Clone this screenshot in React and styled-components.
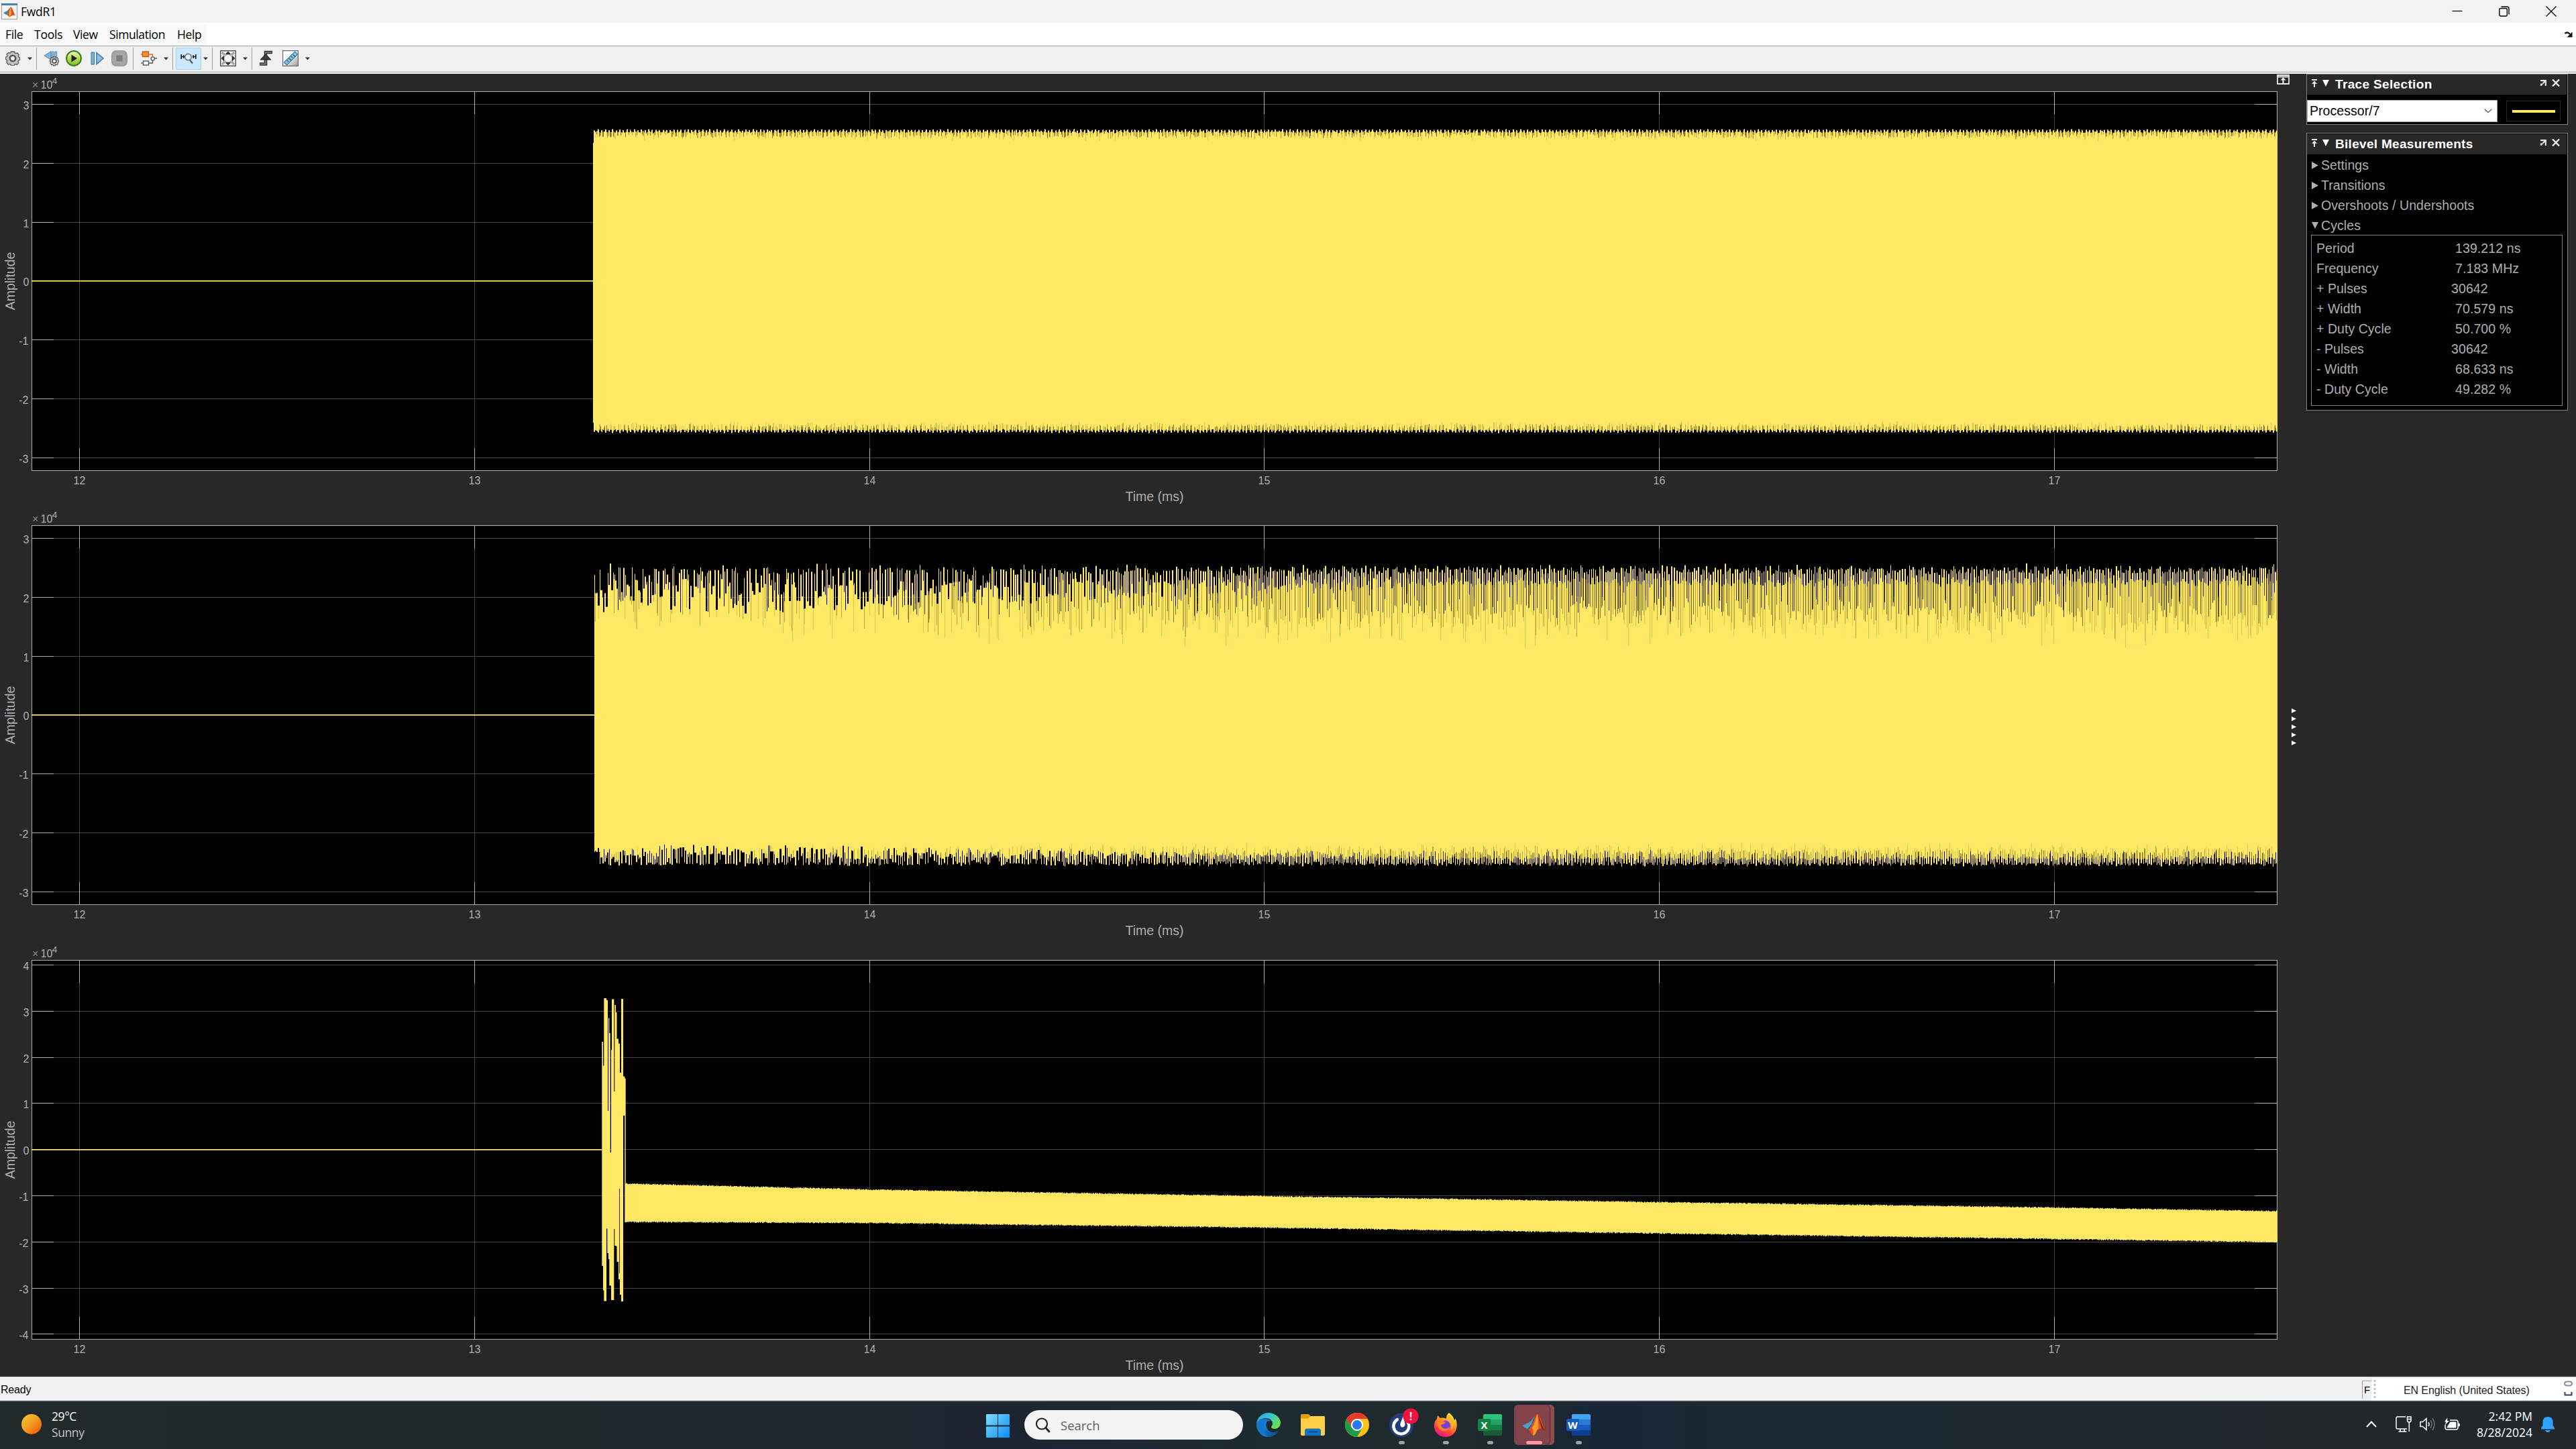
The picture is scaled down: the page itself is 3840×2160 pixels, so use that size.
import React from "react";
import styled, { createGlobalStyle } from "styled-components";

const YELLOW = "#ffe863";
const UI = '"Open Sans", "Noto Sans", sans-serif';
const ARIAL = '"Liberation Sans", Arial, sans-serif';

const Global = createGlobalStyle`
  html, body { margin: 0; padding: 0; background: #282828; overflow: hidden; }
  * { box-sizing: border-box; }
  svg { display: block; flex: none; }
`;

const Screen = styled.div`
  width: 3840px;
  height: 2160px;
  display: flex;
  flex-direction: column;
  overflow: hidden;
  font-family: ${ARIAL};
`;

/* ---------- window chrome ---------- */

const TitleBar = styled.header`
  height: 34px;
  flex: none;
  display: flex;
  align-items: center;
  padding: 0 29px 0 2px;
  background: #f3f3f3;
  font-family: ${UI};
`;

const Title = styled.span`
  flex: 1;
  padding-left: 5px;
  font-size: 17.5px;
  line-height: 34px;
  letter-spacing: -0.3px;
  color: #000;
`;

const WindowButtons = styled.div`
  display: flex;
  align-items: center;
  gap: 54px;
`;

const MenuBar = styled.nav`
  height: 36px;
  flex: none;
  display: flex;
  justify-content: space-between;
  background: #fff;
  border-bottom: 1px solid #f3f3f3;
  box-shadow: inset 0 -1px 0 #a0a0a0;
  font-family: ${UI};
`;

const MenuList = styled.div`
  width: 309px;
  height: 34px;
  display: flex;
  background: #f9f9f9;
  padding-left: 8px;
`;

const MenuItem = styled.span`
  width: ${(p) => p.$w}px;
  font-size: 17.5px;
  line-height: 35px;
  letter-spacing: ${(p) => p.$ls || 0}px;
  white-space: nowrap;
  color: #000;
`;

const MenuCorner = styled.div`
  padding: 13px 5px 0 0;
`;

const Toolbar = styled.div`
  height: 40px;
  flex: none;
  display: flex;
  align-items: center;
  background: #f0f0f0;
  padding-bottom: 4px;
  border-bottom: 2px solid #fff;
  box-shadow: inset 0 -1px 0 #a0a0a0;
`;

const Tool = styled.span`
  display: flex;
  margin-left: ${(p) => p.$ml}px;
`;

const ActiveTool = styled.span`
  width: 38px;
  height: 33px;
  margin-left: 4px;
  display: flex;
  align-items: center;
  justify-content: center;
  background: #cce8ff;
  border: 1px solid #99d1ff;
  border-radius: 2px;
`;

const Separator = styled.span`
  width: 1px;
  height: 33px;
  margin-left: ${(p) => p.$ml}px;
  background: #a0a0a0;
`;

/* ---------- workspace ---------- */

const Workspace = styled.main`
  height: 1942px;
  flex: none;
  display: flex;
  background: #282828;
`;

const Plots = styled.section`
  width: 3394px;
  flex: none;
  display: flex;
  flex-direction: column;
`;

const Splitter = styled.div`
  width: 44px;
  flex: none;
  display: flex;
  flex-direction: column;
  padding-top: 1px;
`;

const SplitterGrip = styled.div`
  display: flex;
  flex-direction: column;
  gap: 5px;
  margin: 930px 0 0 22px;
`;

const Sidebar = styled.aside`
  width: 390px;
  flex: none;
  display: flex;
  flex-direction: column;
  gap: 12px;
`;

const Panel = styled.section`
  height: ${(p) => p.$h}px;
  border: 1px solid #808080;
  background: #000;
  display: flex;
  flex-direction: column;
`;

const PanelHeader = styled.div`
  height: 30px;
  flex: none;
  margin: ${(p) => p.$mt || 0}px 1px 0 0;
  display: flex;
  align-items: center;
  padding: 0 10px 5px 7px;
  background: #282828;
`;

const PanelTitle = styled.h2`
  flex: 1;
  margin: 4px 0 0 9px;
  font-size: 19px;
  line-height: 24px;
  font-weight: 700;
  letter-spacing: ${(p) => p.$ls}px;
  color: #fff;
`;

const TraceRow = styled.div`
  display: flex;
  align-items: center;
  margin-top: 8px;
  gap: 13px;
`;

const Select = styled.div`
  width: 284px;
  height: 33px;
  display: flex;
  align-items: center;
  justify-content: space-between;
  padding: 0 7px 0 3px;
  background: #fff;
  border: 1px solid #a8a8a8;
  font-size: 19.5px;
  letter-spacing: 0.05px;
  color: #000;
`;

const TraceSwatch = styled.div`
  width: 81px;
  height: 31px;
  display: flex;
  align-items: center;
  justify-content: center;
  border: 1px solid #282828;
  &::after {
    content: "";
    width: 64px;
    height: 4px;
    background: ${YELLOW};
  }
`;

const Group = styled.div`
  height: 30px;
  flex: none;
  display: flex;
  align-items: center;
  gap: 4px;
  padding: 2px 0 0 7px;
  font-size: 19.5px;
  letter-spacing: 0.08px;
  color: #afafaf;
`;

const Readings = styled.dl`
  margin: 0 7px 0 6px;
  height: 255px;
  border: 1px solid #808080;
  padding: 4px 0 0 7px;
`;

const Reading = styled.div`
  display: grid;
  grid-template-columns: ${(p) => (p.$count ? 201 : 207)}px 1fr;
  height: 30px;
  align-items: center;
  font-size: 19.5px;
  color: #afafaf;
`;

const Term = styled.dt`
  margin: 0;
  letter-spacing: 0.05px;
`;
const Value = styled.dd`
  margin: 0;
  letter-spacing: 0.1px;
`;

/* ---------- status bar ---------- */

const StatusBar = styled.footer`
  height: 36px;
  flex: none;
  display: flex;
  justify-content: space-between;
  background: #f0f0f0;
  border-top: 1px solid #b4b4b4;
  box-shadow: inset 0 1px 0 #fff;
  font-size: 16px;
  color: #000;
`;

const StatusText = styled.span`
  padding-left: 1px;
  line-height: 38px;
  letter-spacing: -0.2px;
`;

const StatusRight = styled.div`
  display: flex;
`;

const StatusMode = styled.span`
  width: 14px;
  height: 27px;
  margin: 5px 0 0;
  border-left: 1px solid #a0a0a0;
  border-top: 1px solid #a0a0a0;
  padding-left: 2px;
  font-size: 15px;
  line-height: 26px;
`;

const LanguageBar = styled.div`
  width: 305px;
  height: 33px;
  margin-top: 2px;
  display: flex;
  background: #fff;
  padding: 2px 5px 0 3px;
`;

const Language = styled.span`
  flex: 1;
  padding-left: 41px;
  line-height: 31px;
  font-size: 16px;
  letter-spacing: -0.1px;
  color: #222;
`;

/* ---------- taskbar ---------- */

const Taskbar = styled.div`
  height: 72px;
  flex: none;
  display: flex;
  align-items: stretch;
  border-top: 2px solid #40464b;
  background: linear-gradient(90deg, #21292b 0%, #20282b 20%, #1c2431 40%, #1c2a31 47%, #202a2b 57%, #172636 62%, #1c2831 75%, #22272b 90%, #22272b 100%);
  font-family: ${UI};
`;

const Weather = styled.div`
  width: 1470px;
  display: flex;
  align-items: center;
  padding: 0 0 5px 32px;
  gap: 15px;
`;

const Sun = styled.span`
  width: 30px;
  height: 30px;
  border-radius: 50%;
  background: linear-gradient(135deg, #f0c330 10%, #f39a20 50%, #f0640c 85%);
`;

const Stack = styled.div`
  display: flex;
  flex-direction: column;
  align-items: flex-start;
  font-size: 17.5px;
  line-height: 24px;
  letter-spacing: -0.4px;
  color: #fff;
`;

const Muted = styled.span`
  color: #c3c6c8;
`;

const Launcher = styled.div`
  display: flex;
  align-items: center;
`;

const SearchBox = styled.div`
  width: 326px;
  height: 44px;
  margin: 0 5px 2px 22px;
  display: flex;
  align-items: center;
  gap: 15px;
  padding-left: 16px;
  border-radius: 22px;
  background: #f3f3f3;
  font-size: 18.5px;
  color: #5c5c5c;
`;

const TaskSlot = styled.div`
  position: relative;
  width: 66px;
  height: 70px;
  display: flex;
  align-items: center;
  justify-content: center;
  padding-bottom: 2px;
  &::after {
    content: "";
    display: ${(p) => (p.$mark ? "block" : "none")};
    position: absolute;
    bottom: 7px;
    left: ${(p) => (p.$mark === "active" ? 21 : 28.5)}px;
    width: ${(p) => (p.$mark === "active" ? 24 : 9)}px;
    height: 5px;
    border-radius: 3px;
    background: ${(p) => (p.$mark === "active" ? "#ff99a4" : "#9a9fa3")};
  }
`;

const ActiveTile = styled.div`
  width: 60px;
  height: 60px;
  display: flex;
  align-items: center;
  justify-content: center;
  padding: 0 2px 0 0;
  border-radius: 6px;
  background: #82434a;
  box-shadow: inset -6px 0 0 #8a4a50, inset -7px 0 0 #55272d;
`;

const Tray = styled.div`
  margin-left: auto;
  display: flex;
  align-items: center;
  padding: 0 32px 4px 0;
`;

const TrayIcon = styled.span`
  display: flex;
  margin-left: ${(p) => p.$ml}px;
`;

const Clock = styled.div`
  width: 108px;
  display: flex;
  flex-direction: column;
  align-items: flex-end;
  font-size: 17.5px;
  line-height: 24px;
  letter-spacing: 0;
  color: #fff;
`;

/* ---------- scope plots ---------- */

const AXIS = "#afafaf";
const GRID = "#454545";
const X_TICKS = [12, 13, 14, 15, 16, 17].map((v, i) => [v, 118 + Math.round(i * 588.75)]);

function random(seed) {
  let s = seed;
  return () => {
    s = (s + 0x6d2b79f5) | 0;
    let t = Math.imul(s ^ (s >>> 15), 1 | s);
    t = (t + Math.imul(t ^ (t >>> 7), 61 | t)) ^ t;
    return ((t ^ (t >>> 14)) >>> 0) / 4294967296;
  };
}

const bar = (x, w, y0, y1) => `M${x} ${y0.toFixed(1)}h${w}V${y1.toFixed(1)}h${-w}z`;

const SHADES = [0.14, 0.28, 0.5, 0.75];

function steadySignal() {
  const r = random(7);
  let body = "";
  const streaks = ["", "", "", ""];
  for (let x = 885; x < 3395; x += 1) {
    const beat = Math.abs((((x - 885) % 11.1) / 11.1) * 2 - 1);
    const phase = (x - 885) % 5.37;
    const peak = phase < 2;
    const side = () => (peak ? r() * 1.2 + beat * 2 : 2.5 + beat * 2.5 + r() * 2);
    const up = side();
    const down = side();
    body += bar(x, 1, 82 + up, 536 - down);
    if (!peak && r() < 0.7) {
      const k = Math.floor(r() * 3);
      streaks[k] += bar(x, 1, 82 + up, 82 + up + (12 - k * 2) * (0.4 + r() * 0.6));
    }
    if (!peak && r() < 0.7) {
      const k = Math.floor(r() * 3);
      streaks[k] += bar(x, 1, 536 - down - (12 - k * 2) * (0.4 + r() * 0.6), 536 - down);
    }
  }
  return { body: body + bar(884, 1, 103, 520), streaks };
}

function noisySignal() {
  const r = random(31);
  let body = "";
  const streaks = ["", "", "", ""];
  const TOP = 81.5;
  const BOTTOM = 536;
  const edge = (start, depthScale, emit) => {
    let x = start;
    while (x < 3395) {
      const t = Math.min(1, Math.max(0, (x - 1150) / 1000));
      const barW = r() < 0.45 ? 2 : 1;
      const gapW = 1 + Math.floor(r() * (t > 0.6 ? 1.8 : 2.7));
      const beat = Math.abs((((x - 886) % 15.4) / 15.4) * 2 - 1);
      const fast = Math.abs((((x - 886) % 6.7) / 6.7) * 2 - 1);
      const early = (1 - t) * (r() < 0.3 ? r() * 40 : 0);
      const high = (beat * 8 + fast * 10 + r() * 5 + early) * depthScale;
      for (let i = 0; i < barW && x < 3395; i += 1, x += 1) emit(x, high, 0, -1);
      const shared = r();
      for (let i = 0; i < gapW && x < 3395; i += 1, x += 1) {
        const deep = (1 - t) * (24 + shared * 52) + t * (19 + beat * 10 + shared * 10 + (r() < 0.06 ? 24 : 0));
        const black = Math.max(high, deep * depthScale);
        const has = r() < 0.25 + 0.72 * t;
        const pick = Math.floor(r() * (t > 0.15 ? 4 : 2));
        const reach = (130 - pick * 15) * depthScale * (0.55 + beat * 0.25 + r() * 0.2) * (0.8 + 0.2 * Math.min(1, (x - 886) / 450));
        emit(x, black, has ? reach : 0, pick);
      }
    }
  };
  const upper = {};
  const lower = {};
  edge(886, 1, (x, y, reach, k) => {
    upper[x] = TOP + y;
    if (reach > y) streaks[k] += bar(x, 1, TOP + y, TOP + reach);
  });
  edge(886, 0.45, (x, y, reach, k) => {
    let level = BOTTOM - y;
    if (x < 894) level = Math.min(level, 513);
    lower[x] = level;
    const lift = reach * 0.64;
    if (lift > y && x >= 894) streaks[k] += bar(x, 1, BOTTOM - lift, level);
  });
  for (let x = 886; x < 3395; x += 1) body += bar(x, 1, upper[x], lower[x]);
  return { body, streaks };
}

const BURST = [
  [897.3, 899, 1552.9, 1887], [899, 900.3, 1588.6, 1923.5], [900.3, 904, 1488, 1939.5],
  [904, 905.3, 1491, 1831.5], [905.3, 906, 1491, 1868], [906, 907, 1656, 1868],
  [907, 908.3, 1517.5, 1877], [908.3, 909.7, 1540, 1916.5], [909.7, 911, 1718, 1916.5],
  [911, 912, 1565, 1938], [912, 915.3, 1489.5, 1938], [915.3, 916.3, 1627, 1832],
  [916.3, 918, 1498, 1857], [918, 919.5, 1509, 1857.5], [919.5, 922, 1548.5, 1881],
  [922, 923.2, 1555.5, 1907], [923.2, 924, 1555.5, 1772], [923.2, 924, 1898, 1907],
  [924, 926, 1599, 1930], [926, 929, 1489, 1940], [929, 931.3, 1604.5, 1663],
  [931.3, 932.7, 1607.5, 1822],
];

const BAND = [
  [932, 1764.3, 1821.6], [1295, 1773.3, 1823], [1884, 1783, 1830],
  [2473, 1792, 1838.6], [3061, 1800, 1847], [3395, 1805.3, 1851.6],
];

function burstSignal() {
  const r = random(5);
  const shift = 1405;
  let body = BURST.map(([a, b, y0, y1]) => bar(a, +(b - a).toFixed(2), y0 - shift, y1 - shift)).join("");
  let seg = 0;
  for (let x = 932; x < 3395; x += 1) {
    while (x > BAND[seg + 1][0]) seg += 1;
    const [xa, ta, ba] = BAND[seg];
    const [xb, tb, bb] = BAND[seg + 1];
    const f = (x - xa) / (xb - xa);
    body += bar(x, 1, ta + (tb - ta) * f + r() * 1.8 - 0.9 - shift, ba + (bb - ba) * f + r() * 1.8 - 0.9 - shift);
  }
  return { body, streaks: ["", "", "", ""] };
}

const SCOPES = [
  { id: "upper", height: 647, max: 3, first: 45, step: 87.83, zero: 308, start: 885, ...steadySignal() },
  { id: "middle", height: 648, max: 3, first: 45, step: 87.83, zero: 308, start: 886, ...noisySignal() },
  { id: "lower", height: 647, max: 4, first: 33, step: 68.8, zero: 308, start: 897, ...burstSignal() },
];

function ScopePlot({ scope }) {
  const rows = [];
  for (let v = scope.max; v >= -scope.max; v -= 1) {
    rows.push([v, Math.round(scope.first + (scope.max - v) * scope.step)]);
  }
  return (
    <svg width="3395" height={scope.height} viewBox={`0 0 3395 ${scope.height}`} fontFamily={ARIAL} fill={AXIS}>
      <rect x="47" y="26" width="3348" height="566" fill="#000" />
      <g shapeRendering="crispEdges">
        {rows.map(([v, y]) => (
          <g key={v}>
            <rect x="48" y={y} width="3346" height="1" fill={GRID} />
            <rect x="48" y={y} width="32" height="1" />
            <rect x="3361" y={y} width="33" height="1" />
          </g>
        ))}
        {X_TICKS.map(([v, x]) => (
          <g key={v}>
            <rect x={x} y="26" width="1" height="566" fill={GRID} />
            <rect x={x} y="27" width="1" height="33" />
            <rect x={x} y="558" width="1" height="33" />
          </g>
        ))}
        <rect x="47.5" y="26.5" width="3347" height="565" fill="none" stroke={AXIS} />
      </g>
      <rect x="47" y={scope.zero} width={scope.start - 47} height="1" fill={YELLOW} />
      <rect x="47" y={scope.zero + 1} width={scope.start - 47} height="1" fill={YELLOW} opacity="0.7" />
      <path d={scope.body} fill={YELLOW} />
      {scope.streaks.map((d, i) => (
        <path key={i} d={d} fill="#000" opacity={SHADES[i]} />
      ))}
      {rows.map(([v, y]) => (
        <text key={v} x={v < 0 ? 42.5 : 43.5} y={y + 7.5} fontSize="16" textAnchor="end">{v}</text>
      ))}
      {X_TICKS.map(([v, x]) => (
        <text key={v} x={x + 0.5} y="612" fontSize="16" textAnchor="middle">{v}</text>
      ))}
      <text x="48" y="22" fontSize="16" fill="#8a8a8a">×</text>
      <text x="60.5" y="22" fontSize="16">10</text>
      <text x="78" y="15" fontSize="13">4</text>
      <text x="1721" y="636.5" fontSize="19.5" textAnchor="middle">Time (ms)</text>
      <text transform="translate(22 309) rotate(-90)" fontSize="19.5" textAnchor="middle">Amplitude</text>
    </svg>
  );
}

/* ---------- icons ---------- */

const MatlabMark = ({ size, w = size }) => (
  <svg width={w} height={size} viewBox="0 0 36 34" preserveAspectRatio="none">
    <path d="M0 18 L11 13 C15 11 16 6 19 3 L14 20 L8 24Z" fill="#4d9bd0" />
    <path d="M8 24 L14 17 L19 5 L20 10 L12 26Z" fill="#22557d" />
    <path d="M9 25 C13 25 14 34 17 34 C22 33 22 24 27 23 C31 22 33 25 36 27 C31 19 28 0 23.500 0 C19 0 19 16 9 25Z" fill="#d9531a" />
    <path d="M23.500 0 C21 4 21 13 15 22 C18 24 17 31 17 34 C22 33 21 24 25 23 C25 16 25 7 23.500 0Z" fill="#f59a2b" />
    <path d="M24 1 C28 7 29 18 36 27 L30 23 C28 16 26 8 24 1Z" fill="#8a1d12" />
  </svg>
);

const AppIcon = () => (
  <svg width="24" height="24" viewBox="0 0 24 24">
    <rect x=".5" y="1" width="23" height="22.500" fill="#f4f4f4" stroke="#9a9a9a" />
    <rect x="0" y="0" width="24" height="3" fill="#4a7fb0" />
    <path d="M3 14 L9 11 L14 5 L10 15 L7 17Z" fill="#3c86bf" />
    <path d="M8 17 L14 5 C17 7 18 14 21 18 C17 16 14 20 12 20Z" fill="#d6501c" />
    <path d="M14 5 L11 15 L12 20 L15 16Z" fill="#f6a12f" />
  </svg>
);

const GEAR_PATH = "M8.500 1h5l.6 2 1.600.8 2-1 2.500 2.800-1 2 .6 1.600 1.800.8v3.500l-2 .8-.7 1.600.9 2-2.500 2.500-2-.9-1.600.7-.8 1.800H8.700l-.8-1.900-1.600-.7-2 .9L1.800 17l.9-2-.6-1.500-1.600-.9V9.200l1.800-.8.7-1.600-1-2L4.500 2.500l2 .9L8 2.800z";

const Gear = () => (
  <svg width="22" height="22" viewBox="0 0 22 22">
    <path d={GEAR_PATH} fill="#c4c4c4" stroke="#585858" strokeWidth="1.300" />
    <circle cx="11" cy="11" r="4.200" fill="#eee" stroke="#555" strokeWidth="2.600" />
  </svg>
);

const Drop = () => (
  <svg width="7" height="5" viewBox="0 0 7 5"><path d="M0 .5h7L3.500 4.500z" fill="#333" /></svg>
);

const StepBack = () => (
  <svg width="23" height="24" viewBox="0 0 23 24">
    <path d="M1 8 L11 1.500 V14Z" fill="#8fb4d2" stroke="#4f7fa8" />
    <path d="M12.500 2h2.600v11h-2.600zM17 2h2.600v9H17z" fill="#a9cbe6" stroke="#4f7fa8" />
    <g transform="translate(9 9) scale(.63)">
      <path d={GEAR_PATH} fill="#c8c8c8" stroke="#555" strokeWidth="1.800" />
      <circle cx="11" cy="11" r="4.600" fill="#fff" stroke="#555" strokeWidth="3" />
    </g>
  </svg>
);

const Play = () => (
  <svg width="24" height="24" viewBox="0 0 24 24">
    <defs>
      <linearGradient id="play" x1="0" y1="0" x2="0" y2="1">
        <stop offset="0" stopColor="#f0f8c8" /><stop offset=".5" stopColor="#b6dc50" /><stop offset="1" stopColor="#7fc02a" />
      </linearGradient>
    </defs>
    <circle cx="12" cy="12" r="10.900" fill="url(#play)" stroke="#3f7a1e" strokeWidth="2" />
    <path d="M8.500 6.500 L17 12 L8.500 17.500Z" fill="#222" />
  </svg>
);

const StepForward = () => (
  <svg width="20" height="20" viewBox="0 0 20 20">
    <path d="M1 1h4.500v18H1z" fill="#7fb0d8" stroke="#3f7097" />
    <path d="M9 1.500 L19 10 L9 18.500Z" fill="#8fbce0" stroke="#3f7fb0" strokeWidth="1.600" />
  </svg>
);

const Stop = () => (
  <svg width="24" height="24" viewBox="0 0 24 24">
    <rect x="0" y="0" width="24" height="24" rx="7" fill="#9b9b9b" />
    <rect x="2" y="2" width="20" height="20" rx="6" fill="#a6a6a6" />
    <rect x="7.500" y="7.500" width="9" height="9" fill="#7c7c7c" />
  </svg>
);

const Blocks = () => (
  <svg width="24" height="24" viewBox="0 0 24 24" fill="none">
    <path d="M11 19h6.500v-4M20 12h4" stroke="#555" strokeWidth="1.400" />
    <rect x="2.500" y="2" width="9" height="7.500" fill="#f0903a" stroke="#c65a12" strokeWidth="1.400" />
    <path d="M0 6h3M11 6h6.500v4" stroke="#d86b1c" strokeWidth="1.300" />
    <rect x="3.500" y="16" width="8" height="6" fill="#fff" stroke="#555" strokeWidth="1.400" />
    <path d="M0 19h3" stroke="#555" strokeWidth="1.300" />
    <circle cx="17.700" cy="12.500" r="2.600" fill="#fff" stroke="#555" strokeWidth="1.300" />
  </svg>
);

const ZoomX = () => (
  <svg width="24" height="20" viewBox="0 0 24 20" fill="none">
    <path d="M1.200 4v7M22.800 4v7M4.800 5.200v4.600M19.200 5.200v4.600M2 7.500h4M18 7.500h4" stroke="#1c1c1c" strokeWidth="1.700" />
    <circle cx="11.500" cy="8" r="4.700" fill="#e6f2fb" stroke="#7c7c7c" strokeWidth="1.800" />
    <path d="M14 12.500 L18 17.500" stroke="#555" strokeWidth="2.200" />
  </svg>
);

const FitView = () => (
  <svg width="24" height="24" viewBox="0 0 24 24">
    <rect x=".7" y=".7" width="22.600" height="22.600" fill="#f4f4f4" stroke="#4d4d4d" strokeWidth="1.400" />
    <path d="M3 3l4 4M21 3l-4 4M3 21l4-4M21 21l-4-4" stroke="#9c9c9c" strokeWidth="3" />
    <circle cx="12" cy="12" r="6" fill="none" stroke="#a8a8a8" strokeWidth="1.500" />
    <path d="M12 1.500l4.500 4.500h-9zM12 22.500l4.500-4.500h-9zM1.500 12L6 7.500v9zM22.500 12L18 7.500v9z" fill="#333" />
  </svg>
);

const Trigger = () => (
  <svg width="20" height="24" viewBox="0 0 20 24">
    <path d="M1 20.500h9V3h10" fill="none" stroke="#2e2e2e" strokeWidth="4.600" />
    <path d="M1.500 20.500h8.500V3h9" fill="none" stroke="#8d8d8d" strokeWidth="1.500" />
    <path d="M10 5.500 L18 14H2Z" fill="#3b3b3b" stroke="#222" />
  </svg>
);

const Ruler = () => (
  <svg width="24" height="24" viewBox="0 0 24 24">
    <defs>
      <linearGradient id="ruler" x1="0" y1="0" x2="1" y2="1">
        <stop offset=".4" stopColor="#fff" /><stop offset="1" stopColor="#999" />
      </linearGradient>
    </defs>
    <rect x=".6" y=".6" width="22.800" height="22.800" fill="url(#ruler)" stroke="#666" strokeWidth="1.200" />
    <path d="M2.500 18 L18.500 2 L22.500 6 L6.500 22Z" fill="#8fc4e8" stroke="#3a78a4" strokeWidth="1.200" />
    <path d="M7 15l2 2M10 12l3 3M13 9l2 2M16 6.500l3 3" stroke="#24506f" strokeWidth="1.200" />
  </svg>
);

const Pin = () => (
  <svg width="8" height="12" viewBox="0 0 8 12"><path d="M0 0h8v2H0zM4 2.500L8 7H5v5H3V7H0z" fill="#e4e4e4" /></svg>
);
const TriDown = ({ color = "#fff" }) => (
  <svg width="10" height="10" viewBox="0 0 10 10"><path d="M0 0h10L5 10z" fill={color} /></svg>
);
const TriRight = ({ color = "#afafaf", w = 10, h = 11 }) => (
  <svg width={w} height={h} viewBox="0 0 10 10" preserveAspectRatio="none"><path d="M0 0v10l10-5z" fill={color} /></svg>
);
const Undock = () => (
  <svg width="10" height="10" viewBox="0 0 10 10"><path d="M1 1.200h7.800V9M8 2L4.500 5.500M2 9V6.500h2.500" fill="none" stroke="#e4e4e4" strokeWidth="2.200" /></svg>
);
const CloseSmall = () => (
  <svg width="12" height="11" viewBox="0 0 12 11"><path d="M1 .5l10 10M11 .5l-10 10" stroke="#e4e4e4" strokeWidth="2.300" /></svg>
);

const Edge = () => (
  <svg width="36" height="36" viewBox="0 0 36 36">
    <defs>
      <linearGradient id="edgeTop" x1="0" y1="0" x2="1" y2=".5"><stop offset="0" stopColor="#2aa6ea" /><stop offset=".55" stopColor="#35c6cf" /><stop offset="1" stopColor="#6be04e" /></linearGradient>
      <linearGradient id="edgeLow" x1="0" y1="0" x2="1" y2="1"><stop offset="0" stopColor="#1b8fe0" /><stop offset="1" stopColor="#0a3f86" /></linearGradient>
    </defs>
    <path d="M0 18C0 7 9 0 18 0s18 7 18 15c0 6-5 9-9 9-3 0-5-1-5-3 0-1 2-2 2-5 0-4-4-8-10-8C7 8 1 12 0 18z" fill="url(#edgeTop)" />
    <path d="M0 18c1-6 6-9 12-9 5 0 8 2 10 4-8-2-12 3-12 9 0 8 7 13 13 14-14 3-23-8-23-18z" fill="#1277cf" />
    <path d="M10 22c0-6 3-9 6-10-3 4-2 16 9 17 3 0 6-1 8-2-3 6-9 9-15 9-5-1-8-7-8-14z" fill="url(#edgeLow)" />
  </svg>
);

const Folder = () => (
  <svg width="36" height="34" viewBox="0 0 36 34">
    <path d="M0 2.500Q0 1 1.500 1H12l3 4h19.500q1.500 0 1.500 1.500V20H0z" fill="#e0a000" />
    <path d="M0 7.500h11L15 4h19.500Q36 4 36 5.500V31q0 2-2 2H2q-2 0-2-2z" fill="#ffcf48" />
    <path d="M6 33v-7q0-3.500 3.500-3.500h17Q30 22.500 30 26v7z" fill="#1272c4" />
    <path d="M11 27.500h14" stroke="#0b4d8a" strokeWidth="2" />
  </svg>
);

const Chrome = () => (
  <svg width="36" height="36" viewBox="0 0 36 36">
    <circle cx="18" cy="18" r="18" fill="#fbc116" />
    <path d="M2.400 9 A18 18 0 0 0 18 36 L25.800 22.500 L10.200 22.500Z" fill="#229a4a" />
    <path d="M2.400 9 A18 18 0 0 1 33.600 9 H18 Q12 9.500 9.600 14.500 L8.600 19.500Z" fill="#e33b2e" />
    <circle cx="18" cy="18" r="9" fill="#fff" />
    <circle cx="18" cy="18" r="7" fill="#2a78ee" />
  </svg>
);

const ClockApp = () => (
  <svg width="36" height="48" viewBox="1 0 36 48" overflow="visible">
    <circle cx="19" cy="24.500" r="18" fill="#243f77" />
    <path d="M13 16a11.500 11.500 0 1 0 15 3" fill="none" stroke="#fff" strokeWidth="4.400" strokeLinecap="round" />
    <path d="M21.500 11c-1 6-5 9-4 14 1.500 4 6.500 3 7-1 .3-4-2-7-3-13z" fill="#fff" />
    <circle cx="33" cy="11" r="11.500" fill="#f5113c" />
    <text x="33" y="17" fontFamily={ARIAL} fontSize="17" fontWeight="700" textAnchor="middle" fill="#fff">!</text>
  </svg>
);

const Firefox = () => (
  <svg width="34" height="36" viewBox="0 0 34 36">
    <defs>
      <linearGradient id="fox" x1=".8" y1="0" x2=".3" y2="1"><stop offset="0" stopColor="#fff04a" /><stop offset=".4" stopColor="#ff9a22" /><stop offset=".75" stopColor="#ff3b45" /><stop offset="1" stopColor="#e0168c" /></linearGradient>
    </defs>
    <path d="M22 0c5 4 7 7 8 11l2-2c5 13-1 27-15 27C6 36-1 28 0 18c0-4 2-7 4-9l1-5 4 4c4-1 7 0 9 1 0-4 1-7 4-9z" fill="url(#fox)" />
    <circle cx="16.500" cy="19" r="7.500" fill="#7a3fe0" />
    <path d="M5 13c4-2 8-1 12 1-2 3-5 3-7 4 1 6 8 8 13 3-1 8-15 9-18-1-1-3-1-5 0-7z" fill="#ff8420" />
    <path d="M18 9c6 3 10 8 7 17 5-5 5-11 2-15l-5-7c-1 2-3 3-4 5z" fill="#ffb52c" />
  </svg>
);

const OfficeIcon = ({ letter, shades, badge }) => (
  <svg width="36" height="34" viewBox="0 0 36 34">
    <path d="M8 3q0-2 2-2h24q2 0 2 2v6H8z" fill={shades[0]} />
    <path d="M8 9h28v8H8z" fill={shades[1]} />
    <path d="M8 17h28v8H8z" fill={shades[2]} />
    <path d="M8 25h28v6q0 2-2 2H10q-2 0-2-2z" fill={shades[3]} />
    <rect x="0" y="8" width="19" height="18" rx="2" fill={badge} />
    <text x="9.500" y="22.500" fontFamily={UI} fontSize="15" fontWeight="700" textAnchor="middle" fill="#fff">{letter}</text>
  </svg>
);

const CYCLES = [
  ["Period", "139.212 ns"],
  ["Frequency", "7.183 MHz"],
  ["+ Pulses", "30642", true],
  ["+ Width", "70.579 ns"],
  ["+ Duty Cycle", "50.700 %"],
  ["- Pulses", "30642", true],
  ["- Width", "68.633 ns"],
  ["- Duty Cycle", "49.282 %"],
];

function PanelBar({ title, ls, mt }) {
  return (
    <PanelHeader $mt={mt}>
      <Pin />
      <Tool $ml={8}><TriDown /></Tool>
      <PanelTitle $ls={ls}>{title}</PanelTitle>
      <Undock />
      <Tool $ml={8}><CloseSmall /></Tool>
    </PanelHeader>
  );
}

export default function App() {
  return (
    <Screen>
      <Global />
      <TitleBar>
        <AppIcon />
        <Title>FwdR1</Title>
        <WindowButtons>
          <svg width="16" height="16" viewBox="0 0 16 16"><path d="M.5 7.500h15" stroke="#000" strokeWidth="1.200" /></svg>
          <svg width="16" height="16" viewBox="0 0 16 16" fill="none" stroke="#000" strokeWidth="1.400"><rect x=".8" y="3.500" width="11.500" height="11.500" rx="2" /><path d="M3.500 1h8.500q3 0 3 3v8.500" /></svg>
          <svg width="16" height="16" viewBox="0 0 16 16"><path d="M.5.5l15 15M15.500.5l-15 15" stroke="#000" strokeWidth="1.300" /></svg>
        </WindowButtons>
      </TitleBar>
      <MenuBar>
        <MenuList>
          <MenuItem $w={43} $ls={-0.4}>File</MenuItem>
          <MenuItem $w={58} $ls={-0.2}>Tools</MenuItem>
          <MenuItem $w={54} $ls={-0.4}>View</MenuItem>
          <MenuItem $w={101} $ls={-0.4}>Simulation</MenuItem>
          <MenuItem $w={40} $ls={-0.4}>Help</MenuItem>
        </MenuList>
        <MenuCorner>
          <svg width="12" height="9" viewBox="0 0 12 9"><path d="M.5 3Q4-.5 8 4" fill="none" stroke="#111" strokeWidth="2.400" /><path d="M11.500.5V8.500H3.500z" fill="#111" /></svg>
        </MenuCorner>
      </MenuBar>
      <Toolbar>
        <Tool $ml={8}><Gear /></Tool>
        <Tool $ml={11}><Drop /></Tool>
        <Separator $ml={6} />
        <Tool $ml={10}><StepBack /></Tool>
        <Tool $ml={10}><Play /></Tool>
        <Tool $ml={13}><StepForward /></Tool>
        <Tool $ml={11}><Stop /></Tool>
        <Separator $ml={8} />
        <Tool $ml={11}><Blocks /></Tool>
        <Tool $ml={10}><Drop /></Tool>
        <Separator $ml={6} />
        <ActiveTool><ZoomX /></ActiveTool>
        <Tool $ml={3}><Drop /></Tool>
        <Separator $ml={6} />
        <Tool $ml={11}><FitView /></Tool>
        <Tool $ml={10}><Drop /></Tool>
        <Separator $ml={6} />
        <Tool $ml={10}><Trigger /></Tool>
        <Tool $ml={15}><Ruler /></Tool>
        <Tool $ml={10}><Drop /></Tool>
      </Toolbar>

      <Workspace>
        <Plots>
          {SCOPES.map((s) => <ScopePlot key={s.id} scope={s} />)}
        </Plots>
        <Splitter>
          <svg width="19" height="15" viewBox="0 0 19 15">
            <path d="M1 1h17v13H1zM1 3.500h17" fill="none" stroke="#e8e8e8" strokeWidth="1.800" />
            <path d="M9.500 4.500l4 4h-3V13h-2V8.500h-3z" fill="#fff" />
          </svg>
          <SplitterGrip>
            {[0, 1, 2, 3, 4].map((i) => <TriRight key={i} color="#fff" w={7} h={7} />)}
          </SplitterGrip>
        </Splitter>
        <Sidebar>
          <Panel $h={76}>
            <PanelBar title="Trace Selection" ls={0.35} />
            <TraceRow>
              <Select>
                Processor/7
                <svg width="12" height="7" viewBox="0 0 12 7"><path d="M.7.700l5.300 5 5.300-5" fill="none" stroke="#555" strokeWidth="1.200" /></svg>
              </Select>
              <TraceSwatch />
            </TraceRow>
          </Panel>
          <Panel $h={414}>
            <PanelBar title="Bilevel Measurements" ls={0.3} mt={1} />
            <Group><TriRight />Settings</Group>
            <Group><TriRight />Transitions</Group>
            <Group><TriRight />Overshoots / Undershoots</Group>
            <Group><TriDown color="#afafaf" />Cycles</Group>
            <Readings>
              {CYCLES.map(([name, value, count]) => (
                <Reading key={name} $count={count}>
                  <Term>{name}</Term>
                  <Value>{value}</Value>
                </Reading>
              ))}
            </Readings>
          </Panel>
        </Sidebar>
      </Workspace>

      <StatusBar>
        <StatusText>Ready</StatusText>
        <StatusRight>
          <StatusMode>F</StatusMode>
          <LanguageBar>
            <svg width="4" height="31" viewBox="0 0 4 31">
              {[0, 6, 12, 18, 24].map((y) => <rect key={y} x=".5" y={y} width="3" height="3" fill="#c4c4c4" />)}
            </svg>
            <Language>EN English (United States)</Language>
            <svg width="13" height="26" viewBox="0 0 13 26" fill="none" strokeWidth="2">
              <path d="M4 2.500Q1 3 1 5.500T4 8.500M9 2.500q3 .5 3 3T9 8.500M4 2.500h5M4 8.500h5" stroke="#8a8f98" />
              <path d="M1.500 18v4.500h10V18" stroke="#33415c" />
            </svg>
          </LanguageBar>
        </StatusRight>
      </StatusBar>

      <Taskbar>
        <Weather>
          <Sun />
          <Stack><span>29°C</span><Muted>Sunny</Muted></Stack>
        </Weather>
        <Launcher>
          <svg width="35" height="35" viewBox="0 0 35 35">
            <defs>
              <linearGradient id="win" x1="0" y1="0" x2="1" y2="1"><stop offset="0" stopColor="#7fdcff" /><stop offset="1" stopColor="#0a8cf5" /></linearGradient>
            </defs>
            <path d="M1 0h16v16.500H0V1q0-1 1-1zM18 0h16q1 0 1 1v15.500H18zM0 18.500h17V35H1q-1 0-1-1zM18 18.500h17V34q0 1-1 1H18z" fill="url(#win)" />
          </svg>
          <SearchBox>
            <svg width="23" height="23" viewBox="0 0 23 23" fill="none" stroke="#222" strokeWidth="2.200" strokeLinecap="round"><circle cx="10" cy="9.500" r="8" /><path d="M15.800 15.500L21 21" strokeWidth="2.800" /></svg>
            Search
          </SearchBox>
          <TaskSlot><Edge /></TaskSlot>
          <TaskSlot><Folder /></TaskSlot>
          <TaskSlot><Chrome /></TaskSlot>
          <TaskSlot $mark="open"><ClockApp /></TaskSlot>
          <TaskSlot $mark="open"><Firefox /></TaskSlot>
          <TaskSlot $mark="open"><OfficeIcon letter="X" shades={["#2fc27c", "#20a464", "#138046", "#1a5a36"]} badge="#11823f" /></TaskSlot>
          <TaskSlot $mark="active"><ActiveTile><MatlabMark size={32} w={35} /></ActiveTile></TaskSlot>
          <TaskSlot $mark="open"><OfficeIcon letter="W" shades={["#41a5ee", "#2b7cd3", "#185abd", "#103f91"]} badge="#185abd" /></TaskSlot>
        </Launcher>
        <Tray>
          <TrayIcon $ml={0}>
            <svg width="16" height="10" viewBox="0 0 16 10"><path d="M1 9l7-7.500L15 9" fill="none" stroke="#fff" strokeWidth="2" /></svg>
          </TrayIcon>
          <TrayIcon $ml={28}>
            <svg width="24" height="24" viewBox="0 0 24 24" fill="none" stroke="#fff" strokeWidth="1.500">
              <path d="M15 1H3Q1 1 1 3v14q0 2 2 2h14M7 19v4M13 19v4M4.500 23h12" />
              <path d="M17.500 1h5.500v5.500q0 2.500-2.700 2.500T17.500 6.500zM17.500 4.500H23M20.300 9v14" />
            </svg>
          </TrayIcon>
          <TrayIcon $ml={12}>
            <svg width="24" height="20" viewBox="0 0 24 20" fill="none" stroke="#fff" strokeWidth="1.500">
              <path d="M1 6.500h3.500L10 1.500v17L4.500 13.500H1zM13 7q2 3 0 6" />
              <path d="M16 4q4 6 0 12M19 1q6 9 0 18" stroke="#6f7478" />
            </svg>
          </TrayIcon>
          <TrayIcon $ml={12}>
            <svg width="24" height="20" viewBox="0 0 24 20">
              <path d="M9 4h9q3 0 3 3v8q0 3-3 3H5q-3 0-3-3v-4" fill="none" stroke="#fff" strokeWidth="1.500" />
              <path d="M9.500 6.500H17q1.500 0 1.500 1.500v6q0 1.500-1.500 1.500H6q-1.500 0-1.500-1z" fill="#fff" />
              <path d="M21.500 8.500h1.200q1.300 0 1.300 2.500t-1.300 2.500h-1.200zM5.500 0L1 6.500h2.500L1.500 11.500 8 5H5z" fill="#fff" />
            </svg>
          </TrayIcon>
          <Clock><span>2:42 PM</span><span>8/28/2024</span></Clock>
          <TrayIcon $ml={13}>
            <svg width="20" height="23" viewBox="0 0 20 23">
              <path d="M10 0Q17.500 0 17.500 8v4.500L20 17v1.500H0V17l2.500-4.500V8Q2.500 0 10 0zM6 20h8q-1 3-4 3t-4-3z" fill="#2ea3ff" />
            </svg>
          </TrayIcon>
        </Tray>
      </Taskbar>
    </Screen>
  );
}
